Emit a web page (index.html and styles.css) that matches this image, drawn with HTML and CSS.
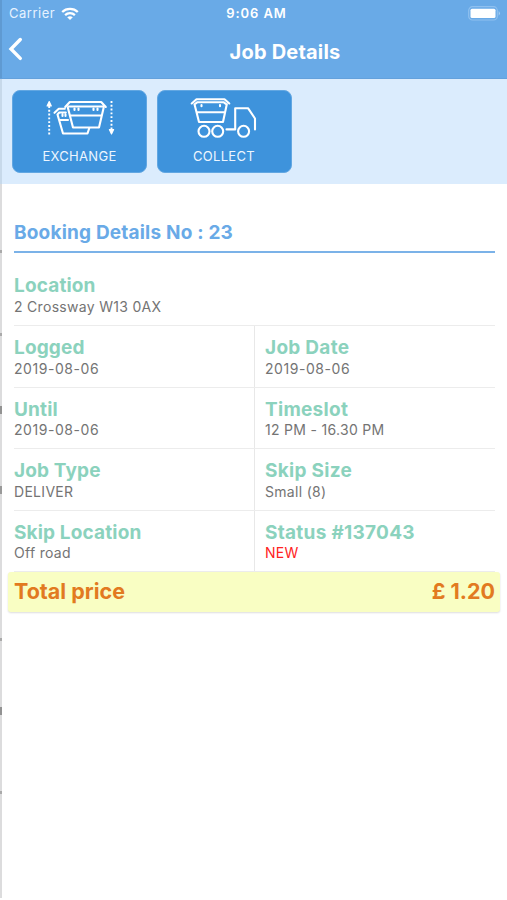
FILE: index.html
```html
<!DOCTYPE html>
<html lang="en">
<head>
<meta charset="utf-8">
<title>Job Details</title>
<link rel="stylesheet" href="styles.css">
</head>
<body>
<div class="screen">
  <header class="header">
    <div class="status">
      <div class="carrier"><span class="carrier-name">Carrier</span>
        <svg class="wifi" width="18" height="14" viewBox="0 0 18 14" fill="none" stroke="#fff" stroke-width="2.3"><path d="M1.2 5C5.5.8 12.5.8 16.8 5M4.1 8.1c2.8-2.6 7-2.6 9.8 0"/><path d="M6.2 10.3Q9 8.1 11.8 10.3L9 13Z" fill="#fff" stroke="none"/></svg>
      </div>
      <span class="clock">9:06 AM</span>
      <svg class="battery" width="33" height="15" viewBox="0 0 33 15"><rect x=".7" y=".7" width="28.6" height="13.3" rx="3.8" fill="none" stroke="#8fc0ef" stroke-width="1.2"/><rect x="2.5" y="2.7" width="25" height="9.3" rx="1.5" fill="#fff"/><path d="M30.700 5q2.400 2.300 0 4.800z" fill="#a9cff3"/></svg>
    </div>
    <nav class="nav">
      <svg class="back" width="16" height="24" viewBox="0 0 16 24" fill="none" stroke="#fff" stroke-width="3.4" stroke-linecap="round"><path d="M12.300 2.500 3 12l9.300 9.400"/></svg>
      <h1 class="title">Job Details</h1>
      <span></span>
    </nav>
  </header>
  <section class="actions">
    <button class="action">
      <svg width="72" height="44" viewBox="0 0 72 44" fill="none" stroke="#fff" stroke-width="2.1" stroke-linejoin="round" stroke-linecap="round">
        <path d="M5.200 9v29M67.500 4v28" stroke-width="1.900" stroke-dasharray="1.900 1.900" stroke-linecap="butt"/>
        <path d="m3.100 9 2.100-4.500L7.300 9zM65.400 32.500l2.100 4.500 2.100-4.500z" fill="#fff" stroke-width="1.200"/>
        <path d="M21.200 10 25.800 5h31.400l4.600 5M24.500 9.500h34.500"/>
        <path d="M23.800 10.500 29 30.500h26L59.700 10.500M26 18.500h31.500M30.500 11.500v1.500M34.500 11.500v1.500M49.500 11.500v1.500M53.500 11.500v1.500"/>
        <path d="m10.500 15.800 4.300-4h6M13.500 17.500l1.800-2h6.500M13.500 17.500 19 36.500h24.500l1.800-5.500M15.500 23h8.500M18.500 17.500v1.500M21.500 17.500v1.500"/>
      </svg>
      <span>EXCHANGE</span>
    </button>
    <button class="action">
      <svg width="72" height="44" viewBox="0 0 72 44" fill="none" stroke="#fff" stroke-width="2.1" stroke-linejoin="round" stroke-linecap="round">
        <path d="M3.700 6.500 8.500 2.300h28L41.300 6.500M6.500 7.300l3-2.100h26l3 2.100M6.500 7.300 11 25h24l3.800-17.700M8.500 15.300h28M13.500 8v1.200M32 8v1.200"/>
        <circle cx="16" cy="34.300" r="5.500"/><circle cx="29.700" cy="34.300" r="5.500"/><circle cx="55.600" cy="34.300" r="5.500"/>
        <path d="M38.500 32.400H47.200V11.200H60l7 10.300v11"/>
      </svg>
      <span>COLLECT</span>
    </button>
  </section>
  <main class="page">
    <div class="edge"><i class="m1"></i><i class="m2"></i><i class="m3"></i><i class="m4"></i><i class="m5"></i><i class="m6"></i><i class="m7"></i></div>
    <div class="content">
      <h2 class="heading"><span>Booking Details No : 23</span></h2>
      <div class="row wide"><div class="cell"><b>Location</b><span>2 Crossway W13 0AX</span></div></div>
      <div class="row"><div class="cell"><b>Logged</b><span class="date">2019-08-06</span></div><div class="cell"><b>Job Date</b><span class="date">2019-08-06</span></div></div>
      <div class="row"><div class="cell"><b>Until</b><span class="date">2019-08-06</span></div><div class="cell"><b>Timeslot</b><span>12 PM - 16.30 PM</span></div></div>
      <div class="row"><div class="cell"><b>Job Type</b><span>DELIVER</span></div><div class="cell"><b>Skip Size</b><span>Small (8)</span></div></div>
      <div class="row"><div class="cell"><b>Skip Location</b><span>Off road</span></div><div class="cell"><b>Status #137043</b><span class="new">NEW</span></div></div>
      <div class="total"><span>Total price</span><span class="price">£ 1.20</span></div>
    </div>
  </main>
</div>
</body>
</html>
```
FILE: styles.css
```css
* { box-sizing: border-box; }
body { margin: 0; background: #fff; font-family: Inter, "Liberation Sans", sans-serif; }
h1, h2 { margin: 0; }
svg { display: block; flex: none; }
.screen { width: 507px; height: 900px; display: flex; flex-direction: column; overflow: hidden; }
.header { height: 79px; background: #69aae7; border-bottom: 1px solid #64a1dc; color: #fff; box-shadow: inset 2px 0 #5f9ad2; }
.status { height: 27px; padding: 0 6px 0 9px; display: grid; grid-template-columns: 1fr auto 1fr; align-items: center; font-size: 13px; line-height: 27px; }
.carrier { display: flex; align-items: center; gap: 6px; color: #e6f2ff; }
.carrier-name { letter-spacing: .5px; }
.clock { font-weight: 600; letter-spacing: .9px; margin-left: 3px; }
.battery { justify-self: end; }
.nav { height: 50px; padding: 0 6px 0 8px; display: grid; grid-template-columns: 1fr auto 1fr; }
.back { margin-top: 10px; }
.title { font-size: 20px; font-weight: 650; line-height: 50px; margin-left: 61px; letter-spacing: .2px; white-space: nowrap; }
.actions { height: 105px; padding: 11px 12px; display: flex; gap: 9.5px; background: #dbecfd; box-shadow: inset 2px 0 #c7d9ea; }
.action { width: 135px; height: 83px; padding: 6px 0 0; border: 1px solid #62a7e2; border-radius: 8px; background: #3e93dc; color: #edf6ff; font: 400 13px/18px Inter, sans-serif; display: flex; flex-direction: column; align-items: center; }
.action span { margin-top: 6px; letter-spacing: .3px; }
.page { flex: 1; display: flex; }
.edge { width: 2px; height: 714px; background: #dcdcdd; display: flex; flex-direction: column; }
.edge i { width: 2px; height: 3px; background: #aaa; }
.edge .m1 { margin-top: 66px; }
.edge .m2 { margin-top: 80px; }
.edge .m3 { margin-top: 70px; height: 8px; background: #929292; }
.edge .m4 { margin-top: 72px; height: 8px; background: #999; }
.edge .m5 { margin-top: 144px; }
.edge .m6 { margin-top: 66px; height: 8px; background: #929292; }
.edge .m7 { margin-top: 76px; }
.content { flex: 1; padding: 31px 6px 0; }
.heading { height: 38px; margin: 0 6px 11px; border-bottom: 2px solid #7bb2e8; color: #69aae7; font-size: 19px; font-weight: 650; line-height: 36px; letter-spacing: .19px; }
.row { height: 61.5px; margin: 0 6px; border-bottom: 1px solid #ececec; display: grid; grid-template-columns: 240px 1fr; }
.row.wide { grid-template-columns: 1fr; height: 62px; }
.cell { display: flex; flex-direction: column; padding-top: 11px; color: #747474; font-size: 14px; line-height: 18px; letter-spacing: .3px; }
.cell b { color: #8bd2bd; font-size: 19px; font-weight: 650; line-height: 22.500px; letter-spacing: .15px; }
.cell .date { letter-spacing: .55px; }
.cell + .cell { border-left: 1px solid #e8e8e8; padding-left: 10px; }
.cell + .cell b { letter-spacing: .28px; }
.cell .new { color: #f22; }
.total { height: 40px; margin-right: 1px; padding: 0 5px 0 6px; border-radius: 3px; background: #f9fec3; box-shadow: 0 1px 2px #ddd; display: flex; justify-content: space-between; color: #e27a20; font-size: 21.5px; font-weight: 650; line-height: 39px; letter-spacing: 0; }
```
